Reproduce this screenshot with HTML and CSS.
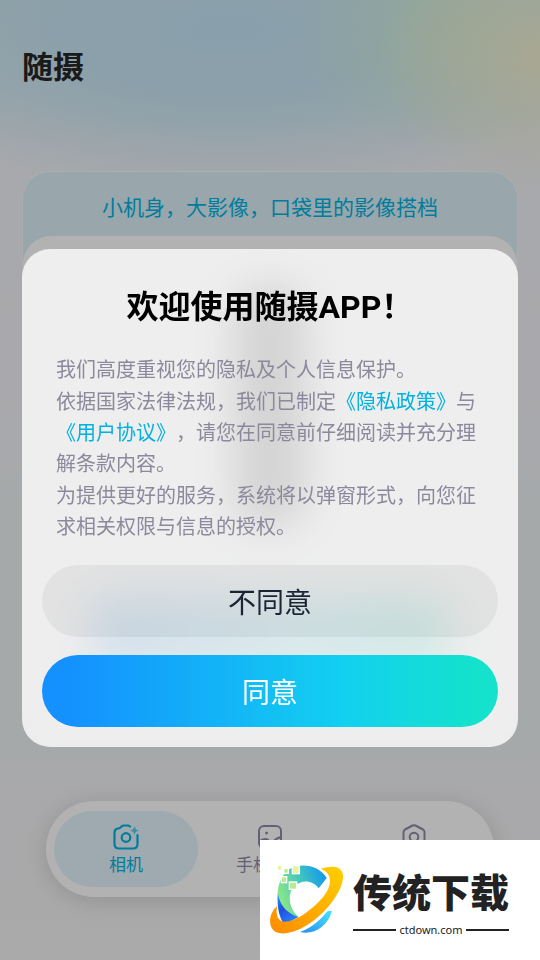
FILE: index.html
```html
<!doctype html>
<html lang="zh-CN">
  <head>
    <meta charset="UTF-8" />
    <meta name="viewport" content="width=device-width, initial-scale=1.0" />
    <title>随摄</title>
    <link rel="stylesheet" href="styles.css">
  </head>
  <body>
    <div class="page">
      <header class="header">
        <h1>随摄</h1>
      </header>

      <main class="banner">
        <p class="slogan">小机身，大影像，口袋里的影像搭档</p>
        <div class="panel">
          <div class="device"></div>
          <div class="connect"></div>
        </div>
      </main>

      <!-- 底部导航 -->
      <nav class="tabbar">
        <a class="tab active" href="#camera">
          <svg class="tab-icon" viewBox="0 0 28 28" fill="none" stroke="currentColor" stroke-width="2.2" stroke-linecap="round">
            <path d="M18 3.500 Q17 2.500 15.500 2.500 H12 Q10.500 2.500 9.500 3.500 L8.500 4.500 Q7.500 5.500 6 5.500 Q2.500 6 2.500 9.500 V21 Q2.500 25.500 7 25.500 H21 Q25.500 25.500 25.500 21 V12" />
            <circle cx="14" cy="14.500" r="4.300" />
            <path class="spark" d="M22.500 3 Q23.200 7 27 7.500 Q23.200 8 22.500 12 Q21.800 8 18 7.500 Q21.800 7 22.500 3Z" />
          </svg>
          <span>相机</span>
        </a>
        <a class="tab" href="#album">
          <svg class="tab-icon" viewBox="0 0 28 28" fill="none" stroke="currentColor" stroke-width="2" stroke-linecap="round">
            <rect x="3" y="3" width="22" height="22" rx="5" />
            <circle cx="10.500" cy="10" r="1" fill="currentColor" stroke-width="1" />
            <path d="M3 19 Q6 16 9 16 Q12 16 14 19 Q16 20 19 17 Q21 15 25 14" />
          </svg>
          <span>手机相册</span>
        </a>
        <a class="tab" href="#settings" aria-label="设置">
          <svg class="tab-icon" viewBox="0 0 28 28" fill="none" stroke="currentColor" stroke-width="2" stroke-linejoin="round">
            <path d="M12.500 2.500 Q14 1.800 15.500 2.500 L23 6.500 Q24.500 7.500 24.500 9 V19 Q24.500 20.500 23 21.500 L15.500 25.500 Q14 26.200 12.500 25.500 L5 21.500 Q3.500 20.500 3.500 19 V9 Q3.500 7.500 5 6.500 Z" />
            <circle cx="14" cy="14" r="4.300" />
          </svg>
        </a>
      </nav>
    </div>

    <!-- 隐私弹窗 -->
    <div class="mask">
      <div class="dialog" role="dialog" aria-labelledby="dialog-title">
        <h2 id="dialog-title">欢迎使用随摄APP！</h2>
        <div class="dialog-text">
          <p>我们高度重视您的隐私及个人信息保护。</p>
          <p>依据国家法律法规，我们已制定<a href="#privacy">《隐私政策》</a>与<a href="#terms">《用户协议》</a>，请您在同意前仔细阅读并充分理解条款内容。</p>
          <p>为提供更好的服务，系统将以弹窗形式，向您征求相关权限与信息的授权。</p>
        </div>
        <button type="button" class="btn btn-refuse">不同意</button>
        <button type="button" class="btn btn-agree">同意</button>
      </div>
    </div>

    <!-- 右下角标识 -->
    <div class="brand">
      <svg class="brand-logo" viewBox="30 45 222 210">
        <defs>
          <linearGradient id="ring" x1="0" y1="1" x2="1" y2="0">
            <stop offset="0" stop-color="#ff8a00" />
            <stop offset="1" stop-color="#ffd000" />
          </linearGradient>
          <linearGradient id="arc" x1="0" y1="0.600" x2="1" y2="0.200">
            <stop offset="0" stop-color="#8fe884" />
            <stop offset="0.500" stop-color="#43c8bd" />
            <stop offset="1" stop-color="#1296ee" />
          </linearGradient>
          <linearGradient id="tail" x1="0" y1="1" x2="1" y2="0">
            <stop offset="0" stop-color="#2b8cf0" />
            <stop offset="1" stop-color="#45e6ff" />
          </linearGradient>
          <linearGradient id="deep" x1="0" y1="0" x2="0.600" y2="1">
            <stop offset="0" stop-color="#1c9cff" />
            <stop offset="0.500" stop-color="#1e50e0" />
            <stop offset="1" stop-color="#2a7cf8" />
          </linearGradient>
        </defs>
        <path fill="url(#arc)" d="M200 84 C176 44 120 36 84 60 C50 88 44 148 64 188 L116 201 C86 176 80 130 104 108 C126 88 158 90 176 115 Z" />
        <path fill="url(#deep)" d="M54 132 C60 168 84 192 116 201 L88 216 L68 216 C56 196 50 160 54 132Z" />
        <path fill="url(#tail)" d="M120 246 C160 232 184 206 202 184 L216 182 C204 228 162 256 120 246Z" />
        <path fill="url(#ring)" d="M182 56 C216 46 246 46 249 76 C252 118 200 190 140 226 C92 256 38 262 31 222 C28 200 36 182 52 167 C46 192 52 212 72 215 C108 216 160 176 190 140 C216 108 220 70 182 56Z" />
        <g fill="#b8ec90" stroke="#fff" stroke-width="4">
          <rect x="88" y="96" width="22" height="22" />
          <rect x="64" y="80" width="16" height="18" />
          <rect x="71" y="55" width="14" height="15" />
          <rect class="pixel-light" x="97" y="47" width="21" height="24" />
          <rect class="pixel-light" x="52" y="46" width="13" height="15" />
        </g>
      </svg>
      <div class="brand-text">
        <strong>传统下载</strong>
        <span class="brand-site">ctdown.com</span>
      </div>
    </div>
  </body>
</html>
```
FILE: styles.css
```css
* {
  box-sizing: border-box;
}
body {
  margin: 0;
  font-family: Roboto, "Noto Sans CJK SC", sans-serif;
  text-spacing-trim: space-all;
}
h1, h2, p {
  margin: 0;
}
a {
  color: #00b2e0;
  text-decoration: none;
}
.page {
  display: flex;
  flex-direction: column;
  min-height: 100vh;
  padding: 48px 22px 63px;
  background:
    radial-gradient(ellipse 30% 14% at 100% 6%, #f2f0d4 0%, rgba(242,240,212,0) 100%),
    radial-gradient(ellipse 32% 13% at 86% 3%, #d2f0d8 0%, rgba(210,240,216,0) 100%),
    radial-gradient(ellipse 75% 17% at 42% 3%, #c5e6f6 0%, #c8e6f4 40%, rgba(200,230,244,0) 100%),
    linear-gradient(#d2eaf2 0%, #f0f2f6 15%, #f3f3f8 40%, #ecf2f3 56%, #eef2f3 78%, #f2f2f5 82%, #f4f4f4 100%);
}
.header h1 {
  font-size: 31px;
  line-height: 40px;
  font-weight: 600;
  color: #262626;
}
.banner {
  display: flex;
  flex-direction: column;
  flex: 1;
  margin: 83px 0 60px;
  border-radius: 28px;
  border: 1px solid #f6fafa;
  background: #dbeff7;
}
.slogan {
  padding: 20px 0 12px;
  font-size: 21px;
  line-height: 32px;
  text-align: center;
  color: #00b4e2;
}
.panel {
  display: flex;
  flex-direction: column;
  align-items: center;
  justify-content: space-between;
  flex: 1;
  padding: 50px 64px 72px;
  border-radius: 28px;
  background: #fff;
}
.device {
  width: 72px;
  height: 240px;
  border-radius: 28px;
  background: #555;
}
.connect {
  width: 100%;
  height: 72px;
  border-radius: 36px;
  background: linear-gradient(90deg, #4ea2f4, #6cdcf0 60%, #40e0c0);
}
.tabbar {
  display: flex;
  margin: 0 24px;
  padding: 10px 8px;
  height: 96px;
  border-radius: 48px;
  background: #fff;
  box-shadow: 0 4px 24px rgba(0,0,0,0.14);
}
.tab {
  display: flex;
  flex: 1;
  flex-direction: column;
  align-items: center;
  padding-top: 12px;
  border-radius: 38px;
  font-size: 17px;
  line-height: 28px;
  color: #8f8aa6;
}
.tab.active {
  color: #00b2e0;
  background: #e3f4fc;
}
.tab-icon {
  width: 28px;
  height: 28px;
}
.spark {
  fill: currentColor;
  stroke: none;
  opacity: 0.6;
}
.mask {
  position: fixed;
  inset: 0;
  display: flex;
  align-items: center;
  padding: 36px 22px 0;
  background: rgba(0,0,0,0.3);
}
.dialog {
  display: flex;
  flex-direction: column;
  width: 100%;
  padding: 38px 20px 20px;
  border-radius: 28px;
  background: rgba(255,255,255,0.78);
  backdrop-filter: blur(20px);
}
.dialog h2 {
  font-size: 32px;
  line-height: 40px;
  font-weight: 700;
  text-align: center;
  color: #000;
}
.dialog-text {
  display: grid;
  gap: 1px;
  margin: 28px 14px 22px;
  font-size: 20px;
  line-height: 31px;
  color: #8c899c;
}
.btn {
  height: 72px;
  border: none;
  border-radius: 36px;
  font-family: inherit;
  font-size: 28px;
  cursor: pointer;
}
.btn-refuse {
  margin-bottom: 18px;
  color: #1a2433;
  background: rgba(0,0,0,0.05);
}
.btn-agree {
  color: #fff;
  background: linear-gradient(90deg, #1490ff 5%, #12d0f0 66%, #14e2cc 95%);
}
.brand {
  position: fixed;
  right: 0;
  bottom: 0;
  display: flex;
  align-items: center;
  gap: 9px;
  width: 280px;
  height: 120px;
  padding-left: 10px;
  background: #fff;
}
.brand-logo {
  width: 74px;
  height: 70px;
}
.pixel-light {
  fill: #e6f59c;
}
.brand-text {
  display: flex;
  flex-direction: column;
  width: 156px;
  padding-top: 8px;
  color: #222;
}
.brand-text strong {
  font-size: 39px;
  line-height: 52px;
  font-weight: 900;
  white-space: nowrap;
}
.brand-site {
  display: flex;
  align-items: center;
  gap: 3px;
  font-family: "Noto Sans", sans-serif;
  font-size: 11px;
  line-height: 20px;
}
.brand-site::before,
.brand-site::after {
  content: "";
  flex: 1;
  height: 2px;
  background: #222;
}
```
